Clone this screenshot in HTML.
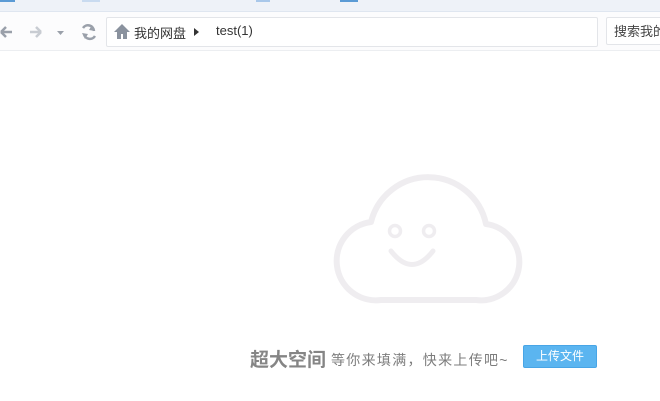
<!DOCTYPE html>
<html><head><meta charset="utf-8"><style>
body{margin:0;width:660px;height:401px;background:#fff;position:relative;overflow:hidden;font-family:"Liberation Sans","Noto Sans CJK SC",sans-serif}
.top{position:absolute;left:0;top:0;width:660px;height:11px;background:#eef2f8;border-bottom:1px solid #dfe6f0}
.tab{position:absolute;top:0;height:2px}
.bar{position:absolute;left:0;top:12px;width:660px;height:38px;background:#fcfcfd;border-bottom:1px solid #eceef1}
.addr{position:absolute;left:106px;top:17px;width:490px;height:28px;border:1px solid #e3e5e9;border-radius:2px;background:#fff}
.search{position:absolute;left:606px;top:17px;width:60px;height:28px;border:1px solid #e3e5e9;border-radius:2px;background:#fff;font-size:13px;color:#444;line-height:28px;padding-left:7px;box-sizing:border-box;white-space:nowrap;overflow:hidden}
.t{position:absolute;font-size:13px;color:#333}
.big{position:absolute;left:250px;top:345px;font-size:19px;font-weight:bold;color:#858585;white-space:nowrap}
.small{position:absolute;left:331px;top:350px;font-size:14px;letter-spacing:1.3px;color:#7d7d7d;white-space:nowrap}
.btn{position:absolute;left:523px;top:345px;width:72px;height:21px;background:#5bb5f0;border:1px solid #48a5e6;border-radius:2px;color:#fff;font-size:12px;text-align:center;line-height:21px}
</style></head><body>
<div class="top"></div>
<div class="tab" style="left:0;width:15px;background:#5b9bd5"></div>
<div class="tab" style="left:82px;width:18px;background:#c9dbf0"></div>
<div class="tab" style="left:256px;width:14px;background:#a9c8ea"></div>
<div class="tab" style="left:340px;width:18px;background:#5b9bd5"></div>
<div class="bar"></div>
<svg style="position:absolute;left:0;top:20px" width="100" height="24" viewBox="0 0 100 24">
<path d="M1 12H12M1 12L6 7M1 12L6 17" stroke="#9aa0aa" stroke-width="2.5" fill="none"/>
<path d="M30 12H41M41 12L36 7M41 12L36 17" stroke="#c8ccd2" stroke-width="2.5" fill="none"/>
<path d="M57 11H64L60.5 15Z" fill="#9aa0aa"/>
<path d="M83 8A6 6 0 0 1 94 11M95 16A6 6 0 0 1 84 14" stroke="#9aa0aa" stroke-width="2.5" fill="none"/>
<path d="M92 5L95 11L89 10Z M85 19L82 13L88 14Z" fill="#9aa0aa"/>
</svg>
<div class="addr"></div>
<svg style="position:absolute;left:113px;top:23px" width="18" height="16" viewBox="0 0 18 16"><path d="M9 1L1 9H4V16H8V11H10V16H14V9H17Z" fill="#8a929e"/></svg>
<div class="t" style="left:134px;top:23px">我的网盘</div>
<svg style="position:absolute;left:194px;top:28px" width="6" height="8"><path d="M0 0L5 4L0 8Z" fill="#333"/></svg>
<div class="t" style="left:216px;top:23px">test(1)</div>
<div class="search">搜索我的</div>
<svg style="position:absolute;left:330px;top:170px" width="200" height="140" viewBox="330 170 200 140">
<path d="M381 300A39 39 0 0 1 371 222A59 59 0 0 1 486 224A38 38 0 0 1 476 300Z" fill="none" stroke="#efedf0" stroke-width="6" stroke-linejoin="round"/>
<circle cx="395" cy="231" r="5.5" fill="none" stroke="#efedf0" stroke-width="3.5"/>
<circle cx="429" cy="231" r="5.5" fill="none" stroke="#efedf0" stroke-width="3.5"/>
<path d="M391 251Q412 278 433 251" fill="none" stroke="#efedf0" stroke-width="5" stroke-linecap="round"/>
</svg>
<div class="big">超大空间</div>
<div class="small">等你来填满，快来上传吧~</div>
<div class="btn">上传文件</div>
</body></html>
